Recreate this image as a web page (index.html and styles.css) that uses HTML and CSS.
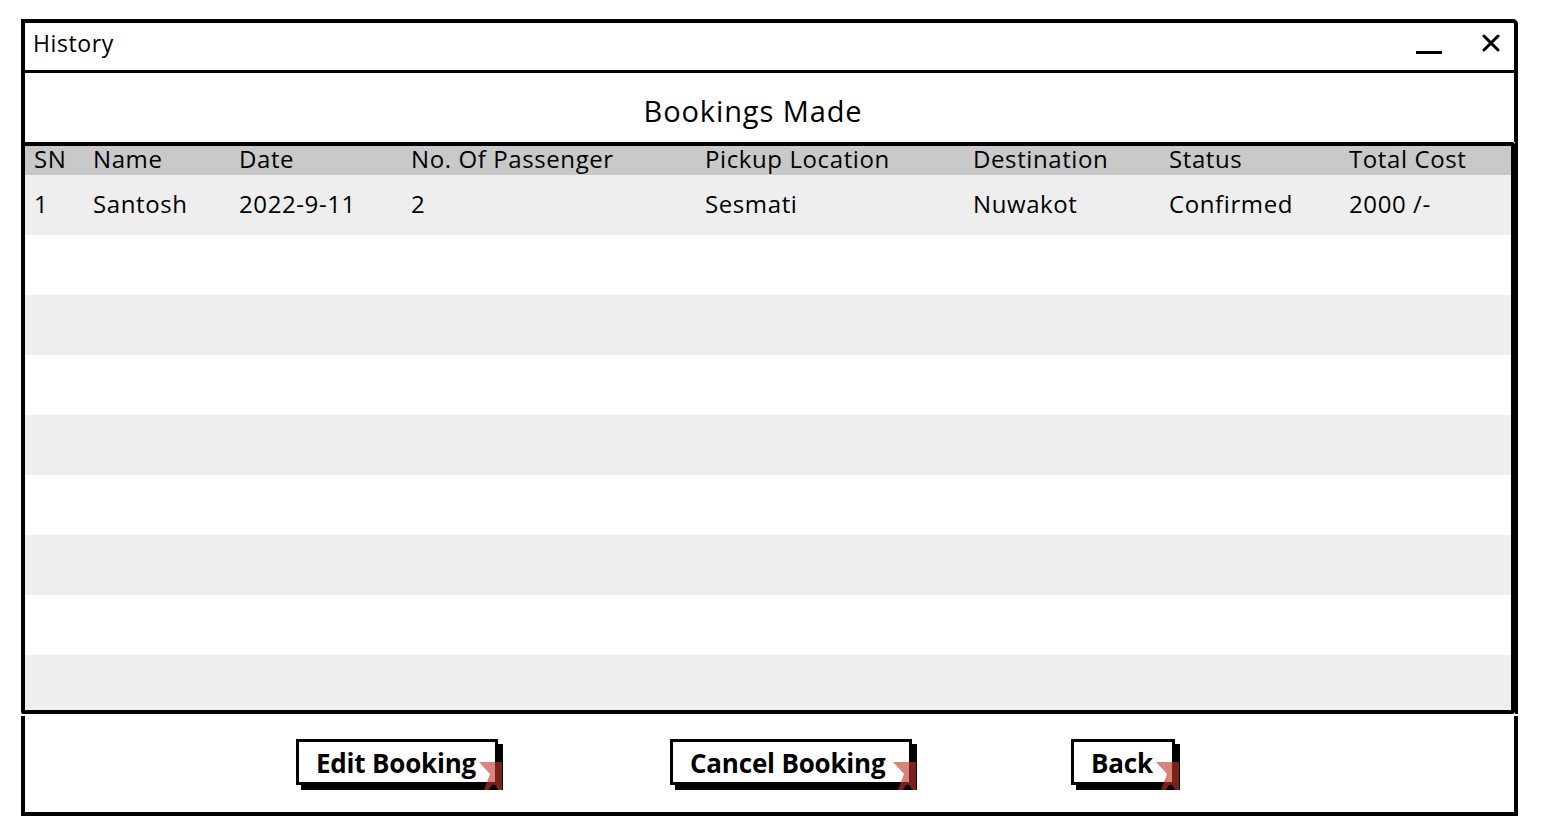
FILE: index.html
```html
<!DOCTYPE html>
<html>
<head>
<meta charset="utf-8">
<title>History</title>
<link rel="stylesheet" href="styles.css">
</head>
<body>
<div class="window">
  <div class="titlebar">
    <span class="title">History</span>
    <div class="controls">
      <span class="minimize"></span>
      <svg class="close" width="18" height="18" viewBox="0 0 18 18"><path d="M2 2 L16 16 M16 2 L2 16" stroke="#000" stroke-width="3" stroke-linecap="round"/></svg>
    </div>
  </div>
  <div class="heading">
    <h1>Bookings Made</h1>
  </div>
  <div class="tablewrap">
    <div class="table">
      <div class="row head">
        <span>SN</span><span>Name</span><span>Date</span><span>No. Of Passenger</span><span>Pickup Location</span><span>Destination</span><span>Status</span><span>Total Cost</span>
      </div>
      <div class="row odd">
        <span>1</span><span>Santosh</span><span>2022-9-11</span><span>2</span><span>Sesmati</span><span>Nuwakot</span><span>Confirmed</span><span>2000 /-</span>
      </div>
      <div class="row"></div>
      <div class="row odd"></div>
      <div class="row"></div>
      <div class="row odd"></div>
      <div class="row"></div>
      <div class="row odd"></div>
      <div class="row"></div>
      <div class="row odd"></div>
    </div>
  </div>
  <div class="footer">
    <button class="btn btn-edit">Edit Booking<svg class="link" width="24" height="28" viewBox="0 0 24 28"><path d="M0 0 H23 V28 H19 Q15 17 10 28 L5 28 L11 12 Z" fill="#c0392b" fill-opacity="0.62"/></svg></button>
    <button class="btn btn-cancel">Cancel Booking<svg class="link" width="24" height="28" viewBox="0 0 24 28"><path d="M0 0 H23 V28 H19 Q15 17 10 28 L5 28 L11 12 Z" fill="#c0392b" fill-opacity="0.62"/></svg></button>
    <button class="btn btn-back">Back<svg class="link" width="24" height="28" viewBox="0 0 24 28"><path d="M0 0 H23 V28 H19 Q15 17 10 28 L5 28 L11 12 Z" fill="#c0392b" fill-opacity="0.62"/></svg></button>
  </div>
</div>
</body>
</html>
```

FILE: styles.css
```css
* { box-sizing: border-box; }
html, body { margin: 0; padding: 0; background: #fff; }
body {
  font-family: "Open Sans", "Liberation Sans", sans-serif;
  color: #000;
  width: 1542px;
  height: 830px;
  overflow: hidden;
}
.window {
  margin: 19px 0 0 21px;
  width: 1497px;
  display: flex;
  flex-direction: column;
}
.titlebar {
  height: 54px;
  border: 4px solid #000;
  border-bottom-width: 3px;
  border-top-right-radius: 5px;
  display: flex;
  align-items: center;
  justify-content: space-between;
  padding: 0 14px 0 8px;
}
.title {
  font-size: 23px;
  letter-spacing: 0.6px;
  line-height: 1;
  margin-top: -7px;
}
.controls {
  display: flex;
  align-items: center;
  gap: 40px;
}
.minimize {
  width: 26px;
  height: 3px;
  background: #000;
  margin-top: 12px;
}
.close { margin-top: -8px; }
.heading {
  height: 69px;
  border-left: 4px solid #000;
  border-right: 4px solid #000;
  display: flex;
  justify-content: center;
  align-items: center;
  padding: 6px 33px 0 0;
}
.heading h1 {
  margin: 0;
  font-size: 29px;
  font-weight: 500;
  line-height: 1;
  letter-spacing: 0.9px;
}
.tablewrap {
  border-right: 3px solid #000;
}
.table {
  width: 1494px;
  height: 572px;
  border: 4px solid #000;
  border-radius: 0 3px 3px 2px;
  overflow: hidden;
}
.row {
  display: grid;
  grid-template-columns: 59px 146px 172px 294px 268px 196px 180px 1fr;
  height: 60px;
  align-items: center;
  font-size: 24px;
  line-height: 28px;
  letter-spacing: 0.6px;
  background: #fff;
}
.row span { padding-left: 9px; white-space: nowrap; }
.row.head {
  height: 29px;
  background: #c9c9c9;
}
.row.head span { margin-top: -4px; }
.row.odd { background: #eeeeee; }
.row.odd span { margin-top: -2px; }
.footer {
  margin-top: 2px;
  height: 100px;
  border: 4px solid #000;
  border-top: 0;
  display: flex;
  align-items: flex-start;
  padding: 23px 0 0 271px;
}
.btn {
  position: relative;
  height: 46px;
  border: 3px solid #000;
  background: #fff;
  box-shadow: 5px 5px 0 #000;
  font-family: "Open Sans", "Liberation Sans", sans-serif;
  font-weight: 700;
  font-size: 26px;
  letter-spacing: -0.2px;
  color: #000;
  padding: 2px 0 0 17px;
  text-align: left;
  line-height: 1;
  display: flex;
  align-items: center;
}
.btn-edit { width: 202px; }
.btn-cancel { width: 242px; margin-left: 172px; }
.btn-back { width: 104px; margin-left: 159px; }
.link {
  position: absolute;
  right: -8px;
  bottom: -8px;
}
```
